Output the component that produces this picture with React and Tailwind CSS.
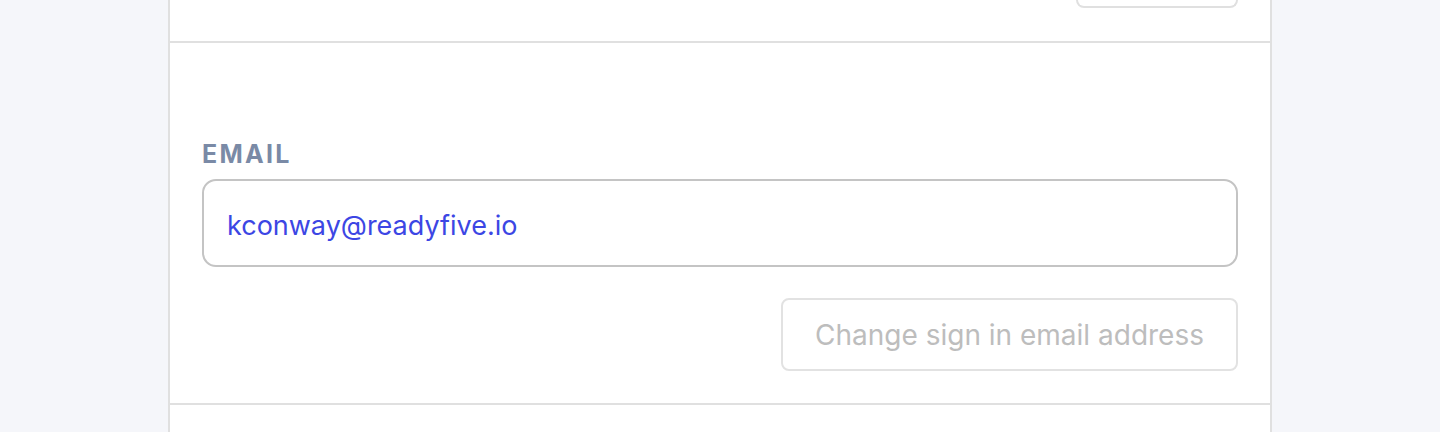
import React from 'react';

export default function App() {
  return (
    <div className="min-h-screen bg-[#f5f6fa] flex justify-center" style={{ fontFamily: "Inter, 'Liberation Sans', sans-serif" }}>
      <div className="w-[1104px] bg-white border-x-2 border-[#e0e0e0] h-[432px] flex flex-col">
        {/* previous section tail */}
        <div className="h-[43px] border-b-2 border-[#e0e0e0] px-[32px] flex justify-end items-start">
          <div className="w-[162px] h-[9px] -mt-[1px] border-2 border-t-0 border-[#e0e0e0] rounded-b-[8px]"></div>
        </div>

        <section className="px-[32px] pt-[96px] pb-[32px] border-b-2 border-[#e0e0e0] flex flex-col">
          <label className="text-[25px] leading-[30px] font-bold tracking-[0.09em] text-[#7a8aa6] uppercase">Email</label>
          <div className="mt-[10px] h-[88px] border-2 border-[#c4c4c4] rounded-[14px] flex items-center px-[23px] pt-[4px]">
            <span className="text-[27px] text-[#3c46e4] leading-none">kconway@readyfive.io</span>
          </div>
          <div className="mt-[31px] flex justify-end">
            <button className="h-[73px] px-[32px] border-2 border-[#e2e2e2] rounded-[8px] text-[28px] text-[#bdbdbd] bg-white">
              Change sign in email address
            </button>
          </div>
        </section>
      </div>
    </div>
  );
}
